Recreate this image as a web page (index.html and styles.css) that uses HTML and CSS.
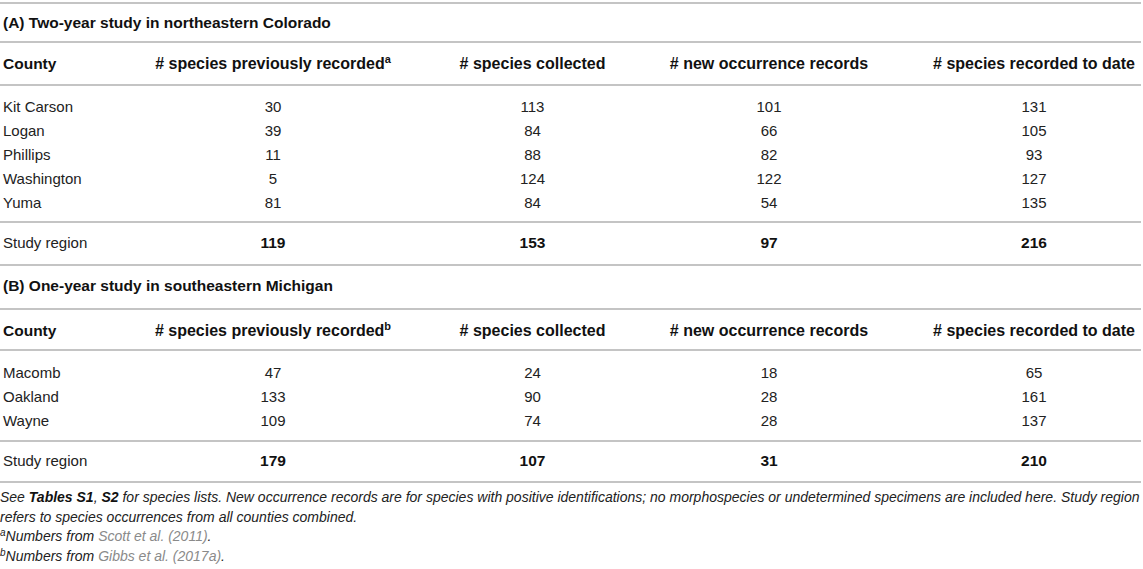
FILE: index.html
```html
<!DOCTYPE html>
<html lang="en">
<head>
<meta charset="utf-8">
<title>Table</title>
<link rel="stylesheet" href="styles.css">
</head>
<body>
<div class="wrap">
<table class="data">
  <colgroup>
    <col class="c1"><col class="c2"><col class="c3"><col class="c4"><col class="c5">
  </colgroup>
  <tbody class="part-a">
    <tr class="title"><td colspan="5">(A) Two-year study in northeastern Colorado</td></tr>
    <tr class="head">
      <th class="left">County</th>
      <th># species previously recorded<sup>a</sup></th>
      <th># species collected</th>
      <th># new occurrence records</th>
      <th># species recorded to date</th>
    </tr>
    <tr class="row first"><td class="left">Kit Carson</td><td>30</td><td>113</td><td>101</td><td>131</td></tr>
    <tr class="row"><td class="left">Logan</td><td>39</td><td>84</td><td>66</td><td>105</td></tr>
    <tr class="row"><td class="left">Phillips</td><td>11</td><td>88</td><td>82</td><td>93</td></tr>
    <tr class="row"><td class="left">Washington</td><td>5</td><td>124</td><td>122</td><td>127</td></tr>
    <tr class="row last"><td class="left">Yuma</td><td>81</td><td>84</td><td>54</td><td>135</td></tr>
    <tr class="total"><td class="left">Study region</td><td><b>119</b></td><td><b>153</b></td><td><b>97</b></td><td><b>216</b></td></tr>
  </tbody>
  <tbody class="part-b">
    <tr class="title"><td colspan="5">(B) One-year study in southeastern Michigan</td></tr>
    <tr class="head">
      <th class="left">County</th>
      <th># species previously recorded<sup>b</sup></th>
      <th># species collected</th>
      <th># new occurrence records</th>
      <th># species recorded to date</th>
    </tr>
    <tr class="row first"><td class="left">Macomb</td><td>47</td><td>24</td><td>18</td><td>65</td></tr>
    <tr class="row"><td class="left">Oakland</td><td>133</td><td>90</td><td>28</td><td>161</td></tr>
    <tr class="row last"><td class="left">Wayne</td><td>109</td><td>74</td><td>28</td><td>137</td></tr>
    <tr class="total end"><td class="left">Study region</td><td><b>179</b></td><td><b>107</b></td><td><b>31</b></td><td><b>210</b></td></tr>
  </tbody>
</table>
<div class="notes">
  <p>See <b>Tables S1</b>, <b>S2</b> for species lists. New occurrence records are for species with positive identifications; no morphospecies or undetermined specimens are included here. Study region refers to species occurrences from all counties combined.</p>
  <p><sup>a</sup>Numbers from <span class="ref">Scott et al. (2011)</span>.</p>
  <p><sup>b</sup>Numbers from <span class="ref">Gibbs et al. (2017a)</span>.</p>
</div>
</div>
</body>
</html>
```
FILE: styles.css
```css
html, body {
  margin: 0;
  padding: 0;
  background: #ffffff;
}
body {
  font-family: "Liberation Sans", Arial, Helvetica, sans-serif;
  color: #222222;
}
.wrap {
  width: 1141px;
  padding-top: 2px;
}
.data {
  width: 1141px;
  border-collapse: collapse;
  table-layout: fixed;
  font-size: 15px;
}
.c1 { width: 92px; }
.c2 { width: 362px; }
.c3 { width: 157px; }
.c4 { width: 316px; }
.c5 { width: 214px; }
.data td, .data th {
  padding: 0;
  line-height: 24px;
  text-align: center;
  white-space: nowrap;
  vertical-align: middle;
}
.data .left {
  text-align: left;
  padding-left: 3px;
}
.data th {
  font-weight: bold;
  font-size: 16px;
  color: #111111;
}
.data th.left {
  font-size: 15.5px;
}
.data th sup {
  font-size: 11px;
  line-height: 0;
  vertical-align: 6px;
}
.data b {
  font-size: 15.5px;
  color: #111111;
}
.title td {
  border-top: 2px solid #c4c4c4;
  font-weight: bold;
  font-size: 15.5px;
  color: #111111;
  text-align: left;
  padding: 7px 0 6px 3px;
}
.part-b .title td {
  padding: 8px 0 10px 3px;
}
.head th {
  border-top: 2px solid #c4c4c4;
  padding-top: 9px;
  padding-bottom: 8px;
}
.part-b .head th {
  padding-top: 9px;
  padding-bottom: 6px;
}
.row.first td {
  border-top: 2px solid #c4c4c4;
  padding-top: 9px;
}
.row.last td {
  padding-bottom: 6px;
}
.part-b .row.first td {
  padding-top: 10px;
}
.part-b .row.last td {
  padding-bottom: 7px;
}
.total td {
  border-top: 2px solid #c4c4c4;
  padding-top: 8px;
  padding-bottom: 9px;
}
.part-b .total td {
  padding-top: 7px;
  padding-bottom: 8px;
}
.total.end td {
  border-bottom: 2px solid #c4c4c4;
}
.notes {
  font-size: 14px;
  font-style: italic;
  color: #222222;
  line-height: 19.5px;
  padding-top: 5px;
}
.notes p {
  margin: 0;
}
.notes b {
  color: #111111;
}
.notes sup {
  font-size: 10px;
  line-height: 0;
  vertical-align: 5px;
}
.notes .ref {
  color: #8a8a8a;
}
```
